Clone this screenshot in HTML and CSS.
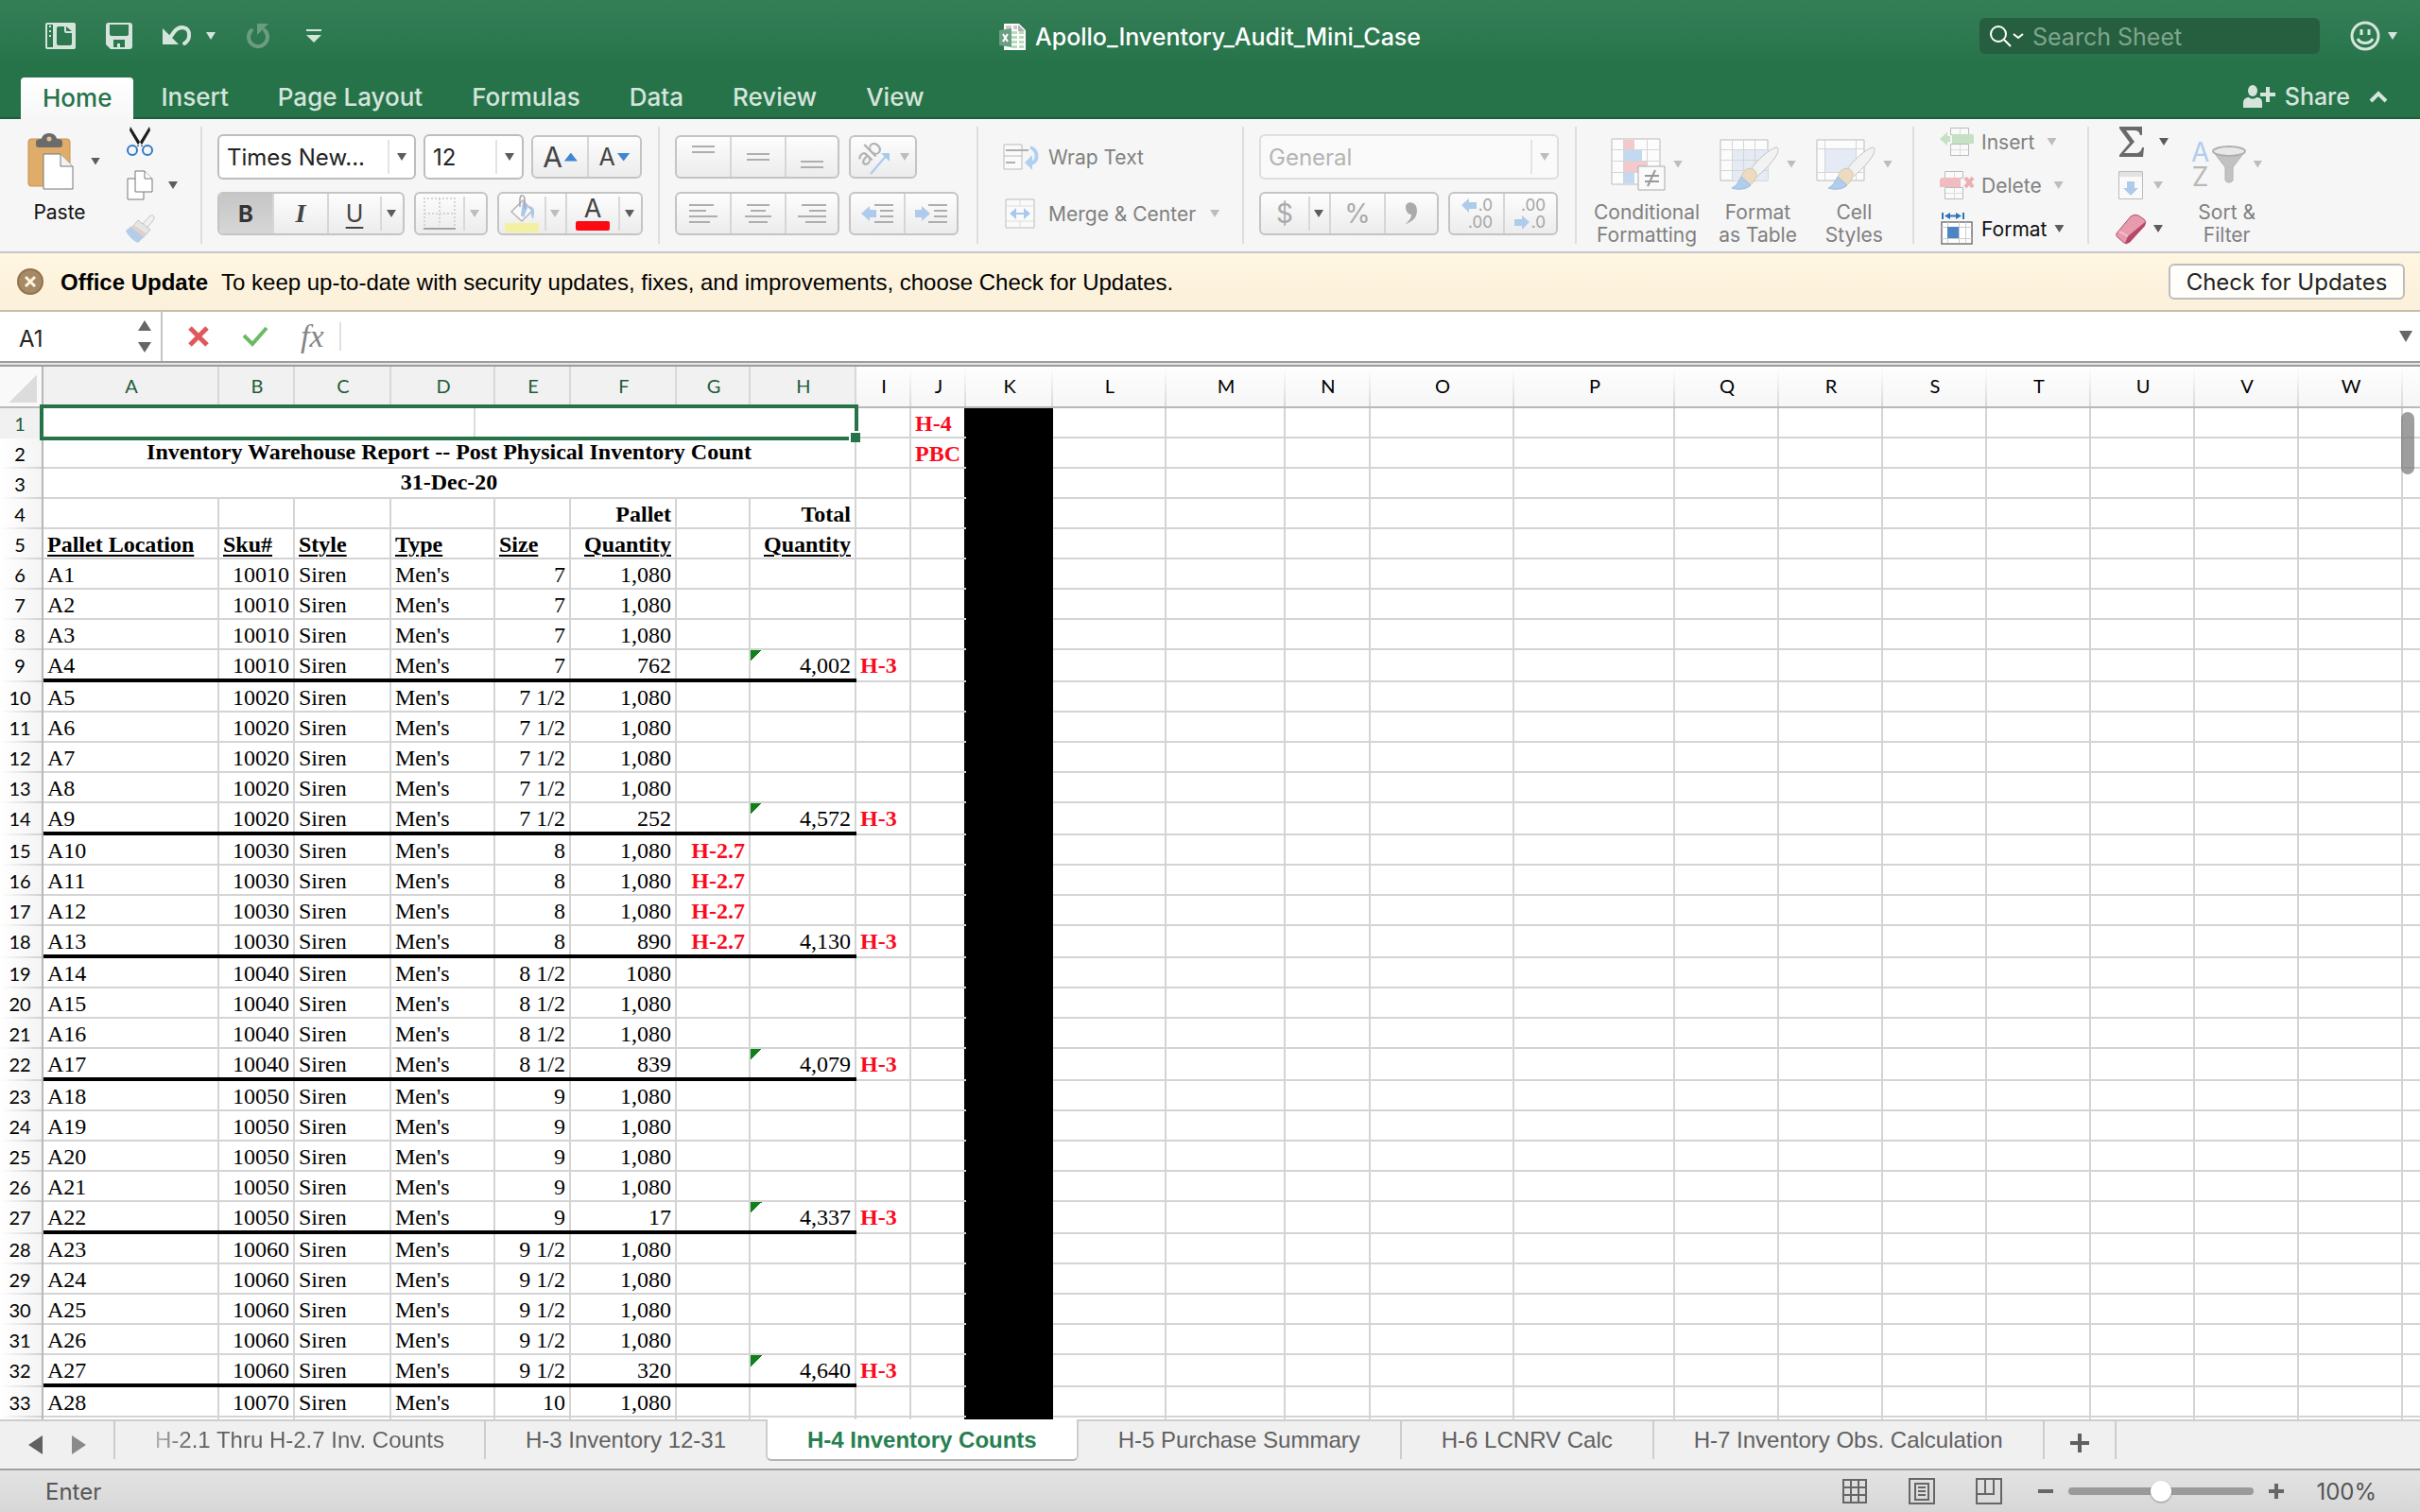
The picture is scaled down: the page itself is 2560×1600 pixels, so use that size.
FILE: index.html
```html
<!DOCTYPE html>
<html lang="en">

	<head>
		<meta charset="UTF-8">
		<title>Apollo_Inventory_Audit_Mini_Case</title>
		<link rel="stylesheet" href="styles.css">
	</head>

	<body>
		<header class="top">
			<div class="titlebar">
				<div class="quick">
					<button class="plain" aria-label="File gallery"><svg width="32" height="28" viewBox="0 0 32 28"><path fill="#d6e5dc" fill-rule="evenodd" d="M2 0h28a2 2 0 0 1 2 2v24a2 2 0 0 1-2 2H2a2 2 0 0 1-2-2V2a2 2 0 0 1 2-2zM2 2v24h6V2zM14 4q-2 0-2 2v16q0 2 2 2h12q2 0 2-2V11h-6q-2 0-2-2V4zM22 4v5h6z"/><path stroke="#d6e5dc" stroke-width="2" stroke-dasharray="2 3" d="M5 3v12"/></svg></button>
					<button class="plain save" aria-label="Save"><svg width="28" height="28" viewBox="0 0 28 28"><path fill="#d6e5dc" fill-rule="evenodd" d="M3 0h22a3 3 0 0 1 3 3v22a3 3 0 0 1-3 3H5l-5-5V3a3 3 0 0 1 3-3zM4 2v10q0 2 2 2h16q2 0 2-2V2zM8 18v8h4v-4h3v4h5v-8z"/></svg></button>
					<button class="plain undo" aria-label="Undo"><svg width="32" height="24" viewBox="0 0 32 24"><path fill="#d6e5dc" d="M0 4v17h17z"/><path fill="none" stroke="#d6e5dc" stroke-width="4" stroke-linecap="round" d="M7 15L12 8C17 1 29 1 28 12 28 15 26 18 23 20"/></svg><i class="caret light"></i></button>
					<button class="plain redo" aria-label="Redo"><svg width="26" height="28" viewBox="0 0 26 28"><path fill="#6c9d80" d="M12 1h12L12 13z"/><path fill="none" stroke="#6c9d80" stroke-width="4" stroke-linecap="round" d="M6 8A10 10 0 1 0 20 8"/></svg></button>
					<button class="plain" aria-label="Customize toolbar"><svg width="16" height="16" viewBox="0 0 16 16"><path fill="#d6e5dc" d="M0 1h16v2H0zM0 7h16l-8 8z"/></svg></button>
				</div>
				<h1 class="title">
					<svg width="28" height="28" viewBox="0 0 28 28"><path fill="#fff" d="M5 0h16l7 7v21H5z"/><path fill="#c9c9c9" d="M7 2h6v4H7zM15 2h4v4h-4z"/><path fill="#b9dcbd" d="M13 8h6v3h-6zM21 8h5v3h-5zM13 13h6v3h-6zM21 13h5v3h-5zM13 18h6v3h-6zM21 18h5v3h-5zM13 23h6v3h-6zM21 23h5v3h-5z"/><path fill="#b0b0b0" d="M20 1v7h7z"/><path fill="#6c9f82" d="M0 7l13-2v20L0 23z"/><path stroke="#fff" stroke-width="2" d="M4 11l5 8M9 11l-5 8"/></svg>
					Apollo_Inventory_Audit_Mini_Case
				</h1>
				<div class="top-right">
					<label class="search">
						<svg width="36" height="24" viewBox="0 0 36 24" fill="none" stroke="#fff" stroke-width="2"><circle cx="10" cy="10" r="8"/><path d="M16 16l7 7M26 10l5 4 5-4"/></svg>
						<input type="text" placeholder="Search Sheet" aria-label="Search Sheet">
					</label>
					<button class="plain smile" aria-label="Feedback"><svg width="32" height="32" viewBox="0 0 32 32" fill="none" stroke="#d6e5dc" stroke-width="3"><circle cx="16" cy="16" r="14"/><path d="M12 9v6M20 9v6M8 19c3 6 13 6 16 0"/></svg><i class="caret light"></i></button>
				</div>
			</div>
			<nav class="tabs">
				<a class="tab on" href="#">Home</a>
				<a class="tab" href="#">Insert</a>
				<a class="tab" href="#">Page Layout</a>
				<a class="tab" href="#">Formulas</a>
				<a class="tab" href="#">Data</a>
				<a class="tab" href="#">Review</a>
				<a class="tab" href="#">View</a>
				<button class="plain share"><svg width="34" height="24" viewBox="0 0 34 24" fill="#d6e5dc"><ellipse cx="10" cy="6" rx="5" ry="6"/><path d="M0 24v-5c0-4 3-6 6-6 2 2 6 2 8 0 4 0 6 2 6 6v5z"/><path d="M24 2h4v6h6v4h-6v6h-4v-6h-6V8h6z"/></svg>Share</button>
				<button class="plain fold" aria-label="Collapse ribbon"><svg width="20" height="14" viewBox="0 0 20 14"><path fill="none" stroke="#d6e5dc" stroke-width="4" d="M2 12l8-8 8 8"/></svg></button>
			</nav>
		</header>

		<div class="ribbon">
			<div class="group clip">
				<button class="plain big">
					<span class="pic paste-pic"><svg width="48" height="60" viewBox="0 0 48 60"><rect y="6" width="44" height="50" rx="3" fill="#dfac69" stroke="#c9924c"/><path fill="#6b6b6b" d="M8 9q0-3 6-3c1-8 15-8 16 0q6 0 6 3v3q0 3-3 3H11q-3 0-3-3z"/><circle cx="22" cy="6" r="2.500" fill="#e8c392"/><path fill="#fff" stroke="#777" d="M16 22h18l13 13v24H16z"/><path fill="#f2f2f2" stroke="#777" d="M34 22v13h13"/></svg><i class="caret"></i></span>
					<span class="cap paste-cap">Paste</span>
				</button>
				<div class="minis">
					<button class="plain mini" aria-label="Cut"><svg width="32" height="32" viewBox="0 0 32 32"><path fill="#1c1c1c" d="M6 0l13 21h-4L5 4zM26 0L13 21h4L27 4z"/><g fill="none" stroke="#2f7bcb" stroke-width="2"><circle cx="8" cy="25" r="5"/><circle cx="24" cy="25" r="5"/></g></svg></button>
					<button class="plain mini copy" aria-label="Copy"><svg width="32" height="32" viewBox="0 0 32 32" fill="#fff" stroke="#777"><path d="M3 9h17v22H3z"/><path d="M11 1h10l8 8v14H11z"/><path d="M21 1v8h8"/></svg><i class="caret"></i></button>
					<button class="plain mini" aria-label="Format painter" disabled><svg width="32" height="32" viewBox="0 0 32 32"><path fill="#f0f0f0" stroke="#c4c4c4" d="M19 11l7-8c3-3 7 0 4 4l-7 9z"/><path fill="#e5e5e5" stroke="#c4c4c4" d="M14 7l13 10-4 5L9 13z"/><path fill="#e3cfc8" d="M9 12l14 10-3 4L5 15z"/><path fill="#b2cdea" d="M6 14l14 11-6 6C9 29 3 23 1 18z"/></svg></button>
				</div>
			</div>

			<div class="group font two">
				<div class="line">
					<span class="combo name"><select aria-label="Font"><option>Times New...</option></select><i class="caret"></i></span>
					<span class="combo size"><select aria-label="Font size"><option>12</option></select><i class="caret"></i></span>
					<div class="seg">
						<button class="w59 cut" aria-label="Increase font size"><span class="big-a">A</span><i class="tri up"></i></button>
						<button class="w54" aria-label="Decrease font size"><span class="small-a">A</span><i class="tri"></i></button>
					</div>
				</div>
				<div class="line wide">
					<div class="seg">
						<button class="w58 cut pressed"><b>B</b></button>
						<button class="w58 cut ital">I</button>
						<button class="w54 under"><u>U</u></button>
						<button class="w24 more" aria-label="Underline options"><i class="caret"></i></button>
					</div>
					<div class="seg">
						<button class="w50" aria-label="Borders" disabled><svg width="34" height="34" viewBox="0 0 34 34" fill="none" stroke="#d4d4d4" stroke-width="2"><path stroke-dasharray="2 2" d="M1 30V1h32v29M17 1v29M1 17h32"/><path stroke="#a4a4a4" d="M0 33h34"/></svg></button>
						<button class="w24 more" aria-label="Border options" disabled><i class="caret"></i></button>
					</div>
					<div class="seg">
						<button class="w48" aria-label="Fill color" disabled><svg width="36" height="40" viewBox="0 0 36 40"><path fill="#fafafa" stroke="#b5b5b5" stroke-width="1.500" d="M7 18L19 6l10 11-11 11z"/><path fill="#a9c9ec" d="M19 7l6 5-5 12-3-2zM26 12c6 1 6 6 4 14-4-5-1-8-4-14z"/><path fill="none" stroke="#a5a5a5" stroke-width="1.500" d="M16 13V5c0-6 5-5 5 0v10"/><rect y="30" width="36" height="10" rx="2" fill="#f3f0a4"/></svg></button>
						<button class="w24 more cut" aria-label="Fill options" disabled><i class="caret"></i></button>
						<button class="w54 color">A<i></i></button>
						<button class="w24 more" aria-label="Font color options"><i class="caret"></i></button>
					</div>
				</div>
			</div>

			<div class="group align two">
				<div class="line wide">
					<div class="seg">
						<button class="w58 cut" aria-label="Top align" disabled><svg class="gl" width="32" height="32"><path d="M4 5h24M4 11h24"/></svg></button>
						<button class="w58 cut" aria-label="Middle align" disabled><svg class="gl" width="32" height="32"><path d="M4 13h24M4 19h24"/></svg></button>
						<button class="w54" aria-label="Bottom align" disabled><svg class="gl" width="32" height="32"><path d="M4 21h24M4 27h24"/></svg></button>
					</div>
					<div class="seg">
						<button class="w68" aria-label="Orientation" disabled><svg width="36" height="36" viewBox="0 0 36 36"><text x="9" y="29" transform="rotate(-45 9 29)" font-family="Inter, sans-serif" font-size="24" fill="#b0b0b0">ab</text><path fill="none" stroke="#a9c9ec" stroke-width="2" d="M15 36l18-21"/><path fill="#a9c9ec" d="M26 14h9v9z"/></svg><i class="caret"></i></button>
					</div>
				</div>
				<div class="line wide">
					<div class="seg">
						<button class="w58 cut" aria-label="Align left" disabled><svg class="gl" width="32" height="22"><path d="M1 2h26M1 8h18M1 14h30M1 20h22"/></svg></button>
						<button class="w58 cut" aria-label="Center" disabled><svg class="gl" width="32" height="22"><path d="M4 2h24M8 8h16M2 14h28M6 20h20"/></svg></button>
						<button class="w54" aria-label="Align right" disabled><svg class="gl" width="32" height="22"><path d="M5 2h26M13 8h18M1 14h30M9 20h22"/></svg></button>
					</div>
					<div class="seg">
						<button class="w58 cut" aria-label="Decrease indent" disabled><svg class="gl" width="34" height="22"><path d="M14 2h20M20 8h14M20 14h14M14 20h20"/><path class="bl" d="M0 11l9-8v4h7v8H9v4z"/></svg></button>
						<button class="w54" aria-label="Increase indent" disabled><svg class="gl" width="34" height="22"><path d="M14 2h20M20 8h14M20 14h14M14 20h20"/><path class="bl" d="M16 11L7 3v4H0v8h7v4z"/></svg></button>
					</div>
				</div>
			</div>

			<div class="group wrap two">
				<button class="plain item" disabled><svg width="38" height="28" viewBox="0 0 38 28"><path fill="#fafafa" stroke="#bbb" d="M1 1h19v26H1zM1 13h19"/><path stroke="#b0b0b0" stroke-width="2" d="M3 7h24M3 20h10"/><path fill="none" stroke="#b2d0ef" stroke-width="4" d="M29 4c8 3 9 14 1 17"/><path fill="#b2d0ef" d="M23 20l8-8v16z"/></svg>Wrap Text</button>
				<button class="plain item" disabled><svg width="38" height="32" viewBox="0 0 38 32"><path fill="#fafafa" stroke="#bbb" d="M3 1h30v30H3z"/><path fill="none" stroke="#ddd" d="M3 8h30M3 24h30M18 1v7M18 24v7"/><path stroke="#a9c9ec" stroke-width="2" d="M10 16h16"/><path fill="#a9c9ec" d="M7 16l7-6v12zM29 16l-7-6v12z"/></svg>Merge &amp; Center<i class="caret"></i></button>
			</div>

			<div class="group number two">
				<div class="line">
					<span class="combo format"><select aria-label="Number format" disabled><option>General</option></select><i class="caret"></i></span>
				</div>
				<div class="line wide">
					<div class="seg">
						<button class="w50 sign" disabled>$</button>
						<button class="w24 more cut" aria-label="Currency options"><i class="caret"></i></button>
						<button class="w58 cut sign" disabled>%</button>
						<button class="w54" aria-label="Comma style" disabled><svg width="16" height="24" viewBox="0 0 16 24"><path fill="#aaa" d="M2 5c0-7 12-7 12 4 0 8-6 12-12 14 3-3 6-6 6-10-3 0-6-3-6-8z"/></svg></button>
					</div>
					<div class="seg">
						<button class="w58 cut dec" disabled><span><svg width="16" height="14"><path class="bl" d="M0 7l8-7v4h8v7H8v4z"/></svg>.0</span><span>.00</span></button>
						<button class="w54 dec" disabled><span>.00</span><span><svg width="16" height="14"><path class="bl" d="M16 7L8 0v4H0v7h8v4z"/></svg>.0</span></button>
					</div>
				</div>
			</div>

			<div class="group styles">
				<button class="plain big" disabled>
					<span class="pic"><svg width="58" height="56" viewBox="0 0 58 56"><path fill="#fcfcfc" stroke="#bbb" d="M1 1h51v48H1z"/><path fill="#f3c9cb" d="M14 2h11v10H14zM14 25h25v11H14z"/><path fill="#c2d9f1" d="M14 13h19v11H14zM14 37h11v11H14z"/><path fill="none" stroke="#d5d5d5" d="M1 12.500h51M1 24.500h51M1 36.500h51M13.500 1v48M38.500 1v48"/><path fill="#fafafa" stroke="#aaa" d="M29 30h28v25H29z"/><path stroke="#999" stroke-width="2" d="M36 40h15M36 46h15M47 34l-8 17"/></svg><i class="caret"></i></span>
					<span class="cap">Conditional<br>Formatting</span>
				</button>
				<button class="plain big" disabled>
					<span class="pic"><svg width="63" height="54" viewBox="0 0 63 54"><path fill="#fcfcfc" stroke="#bbb" d="M1 1h50v43H1z"/><path fill="#e4ebf4" d="M13 12h38v32H13z"/><path fill="none" stroke="#d5d5d5" d="M1 11.500h50M1 22.500h50M1 33.500h50M13.500 1v43M25.500 1v43M37.500 1v43"/><use href="#brush"/></svg><i class="caret"></i></span>
					<span class="cap">Format<br>as Table</span>
				</button>
				<button class="plain big" disabled>
					<span class="pic"><svg width="63" height="54" viewBox="0 0 63 54"><path fill="#fcfcfc" stroke="#bbb" d="M1 1h50v43H1z"/><path fill="none" stroke="#d5d5d5" d="M1 10.500h50M1 35.500h50M9.500 1v43M42.500 1v43"/><path fill="#e4ebf4" d="M10 11h32v24H10z"/><g id="brush"><path fill="#f2f2f2" stroke="#c2c2c2" d="M31 35C40 22 52 11 60 9c3 0 2 4 1 7-5 9-13 17-23 25z"/><path fill="#ecdbc0" stroke="#d8c6a8" d="M23 41c2-9 9-12 14-8 5 5 0 13-5 16z"/><path fill="#b0cdee" stroke="#9dbbe0" d="M23 40l10 9c-5 5-14 5-20 3 5-2 7-7 10-12z"/></g></svg><i class="caret"></i></span>
					<span class="cap">Cell<br>Styles</span>
				</button>
			</div>

			<div class="group cells minis">
				<button class="plain item" disabled><svg width="36" height="32" viewBox="0 0 36 32"><path fill="#fafafa" stroke="#bbb" d="M11.500 1.500h19v7h-19zM11.500 18.500h19v12h-19z"/><path stroke="#ddd" d="M21.500 2v6M21.500 19v11M12 24.500h18"/><path fill="#c5e0c2" d="M0 13l8-7v4h3v6H8v4zM13 8h21a2 2 0 0 1 2 2v8H13z"/></svg>Insert<i class="caret"></i></button>
				<button class="plain item" disabled><svg width="36" height="32" viewBox="0 0 36 32"><path fill="#fafafa" stroke="#bbb" d="M5.500 1.500h19v7h-19zM5.500 18.500h19v12h-19z"/><path stroke="#ddd" d="M15.500 2v6M15.500 19v11M6 24.500h18"/><path fill="#f0bcbf" d="M2 8h20v10H0v-8z"/><path stroke="#eab0b3" stroke-width="4" d="M27 8l8 10M35 8l-8 10"/></svg>Delete<i class="caret"></i></button>
				<button class="plain item"><svg width="36" height="34" viewBox="0 0 36 34"><path stroke="#2f74b9" stroke-width="2" d="M3 0v7M25 0v7M8 3.500h12"/><path fill="#2f74b9" d="M5 3.500l6-3.500v7zM23 3.500l-6-3.500v7z"/><path fill="#fff" stroke="#777" stroke-width="1.500" d="M2 10h32v23H2z"/><path stroke="#ccc" d="M8.500 10v22M20.500 10v22M27.500 10v22M2 15.500h32M2 27.500h32"/><path fill="#4a86c6" d="M8 15h12v12H8z"/></svg>Format<i class="caret"></i></button>
			</div>

			<div class="group edit">
				<div class="minis">
					<button class="plain mini" aria-label="AutoSum"><svg width="38" height="32" viewBox="0 0 38 32"><path fill="#6a6a6a" d="M4 0h24v9h-2c-1-4-3-5-7-5h-8l9 12-11 12h12c4 0 6-2 7-6h2l-1 10H4v-2l11-13L4 2z"/></svg><i class="caret"></i></button>
					<button class="plain mini" aria-label="Fill" disabled><svg width="32" height="32" viewBox="0 0 32 32"><path fill="#fafafa" stroke="#bbb" d="M3.500 1.500h25v29h-25z"/><path fill="#e2e2e2" d="M4 2h24v5H4z"/><path class="bl" d="M12 12h8v7h4l-8 8-8-8h4z"/></svg><i class="caret"></i></button>
					<button class="plain mini" aria-label="Clear"><svg width="32" height="32" viewBox="0 0 32 32"><path fill="#e89aae" stroke="#b4536d" d="M1 21L16 3q4-3 8-1l6 4q3 2 1 6L15 30q-4 3-6 1l-7-6q-2-2-1-4z"/><path fill="#b8476a" d="M31 9v4L15 30q-3 2-5 1l3-7z"/><path fill="none" stroke="#f6c3cf" stroke-width="2" d="M4 19l9 5"/></svg><i class="caret"></i></button>
				</div>
				<button class="plain big" disabled>
					<span class="pic az"><span class="letters"><span>A</span><span>Z</span></span><svg width="36" height="40" viewBox="0 0 36 40"><path fill="#c2c2c2" stroke="#b0b0b0" d="M1 6l13 17v13c0 4 8 4 8 0V23L35 6z"/><ellipse cx="18" cy="6" rx="17" ry="5" fill="#e8e8e8" stroke="#b0b0b0" stroke-width="2"/></svg><i class="caret"></i></span>
					<span class="cap">Sort &amp;<br>Filter</span>
				</button>
			</div>
		</div>

		<div class="notice">
			<button class="plain close" aria-label="Dismiss"><svg width="28" height="28" viewBox="0 0 28 28"><circle cx="14" cy="14" r="13" fill="#a68a66" stroke="#8f7350" stroke-width="2"/><path stroke="#fdf3df" stroke-width="3" d="M9 9l10 10M19 9L9 19"/></svg></button>
			<strong>Office Update</strong>
			<span class="msg">To keep up-to-date with security updates, fixes, and improvements, choose Check for Updates.</span>
			<button class="check">Check for Updates</button>
		</div>

		<div class="formula">
			<div class="namebox">
				<input type="text" value="A1" aria-label="Name box">
				<svg width="14" height="34" viewBox="0 0 14 34" fill="#666"><path d="M7 0l7 11H0zM7 34l7-11H0z"/></svg>
			</div>
			<button class="plain" aria-label="Cancel"><svg width="22" height="22" viewBox="0 0 22 22"><path stroke="#e0585b" stroke-width="5" d="M2 2l18 18M20 2L2 20"/></svg></button>
			<button class="plain ok" aria-label="Enter"><svg width="28" height="22" viewBox="0 0 28 22"><path fill="none" stroke="#6cba64" stroke-width="4" d="M2 10l9 9L26 2"/></svg></button>
			<button class="plain fx" aria-label="Insert function">fx</button>
			<input class="entry" type="text" aria-label="Formula">
			<button class="plain" aria-label="Expand formula bar"><svg width="14" height="12"><path fill="#666" d="M0 0h14l-7 12z"/></svg></button>
		</div>

		<main class="sheet">
			<table id="grid">
				<colgroup></colgroup>
				<thead></thead>
				<tbody></tbody>
			</table>
			<div class="scroll"></div>
		</main>

		<div class="sheets">
			<div class="arrows">
				<button class="plain" aria-label="Previous sheet"><svg width="15" height="20"><path fill="#606060" d="M15 0v20L0 10z"/></svg></button>
				<button class="plain" aria-label="Next sheet"><svg width="15" height="20"><path fill="#8a8a8a" d="M0 0v20l15-10z"/></svg></button>
			</div>
			<a class="leaf faded" href="#">H-2.1 Thru H-2.7 Inv. Counts</a>
			<a class="leaf before" href="#">H-3 Inventory 12-31</a>
			<a class="leaf now" href="#">H-4 Inventory Counts</a>
			<a class="leaf" href="#">H-5 Purchase Summary</a>
			<a class="leaf" href="#">H-6 LCNRV Calc</a>
			<a class="leaf" href="#">H-7 Inventory Obs. Calculation</a>
			<button class="leaf add" aria-label="New sheet"><svg width="20" height="20"><path stroke="#606060" stroke-width="4" d="M10 0v20M0 10h20"/></svg></button>
		</div>

		<footer class="status">
			<span class="mode">Enter</span>
			<button class="plain" aria-label="Normal view"><svg class="vw" width="28" height="28"><path d="M2 2h24v24H2zM10 2v24M18 2v24M2 10h24M2 18h24"/></svg></button>
			<button class="plain" aria-label="Page layout view"><svg class="vw" width="28" height="28"><path d="M1 1h26v26H1zM7 6h14v17H7zM10 10h8M10 14h8M10 18h8"/></svg></button>
			<button class="plain" aria-label="Page break view"><svg class="vw" width="28" height="28"><path d="M1 1h26v26H1zM1 17h18V1M10 1v16"/></svg></button>
			<div class="zoom">
				<button class="plain" aria-label="Zoom out"><svg width="16" height="16"><path fill="#666" d="M0 6h16v4H0z"/></svg></button>
				<input type="range" min="0" max="200" value="100" aria-label="Zoom">
				<button class="plain" aria-label="Zoom in"><svg width="16" height="16"><path fill="#666" d="M0 6h6V0h4v6h6v4h-6v6H6v-6H0z"/></svg></button>
			</div>
			<span class="percent">100%</span>
		</footer>
		<script src="script.js" charset="UTF-8"></script>
	</body>

</html>
```

FILE: styles.css
```css
* {
	margin: 0;
	padding: 0;
	box-sizing: border-box;
}

body {
	display: flex;
	flex-direction: column;
	height: 100vh;
	overflow: hidden;
	font-family: Inter, "Liberation Sans", sans-serif;
	font-size: 24px;
	color: #222;
	background-color: #fff;
}

button, input, select {
	font: inherit;
	color: inherit;
	border: none;
	outline: none;
	background: none;
}
a {
	color: inherit;
	text-decoration: none;
}
svg {
	display: block;
	flex: none;
	overflow: visible;
}
.plain {
	display: flex;
	align-items: center;
}

.caret {
	flex: none;
	width: 10px;
	height: 8px;
	background-color: #5c5c5c;
	clip-path: polygon(0 0, 100% 0, 50% 100%);
}
.caret.light {
	background-color: #d6e5dc;
}
:disabled .caret, :disabled + .caret {
	background-color: #bdbdbd;
}

/* green top */
.top {
	background: linear-gradient(#357f57, #26734a 70px);
	border-bottom: 2px solid #1e5f3b;
	color: #d6e5dc;
}
.titlebar {
	display: grid;
	grid-template-columns: 1fr auto 1fr;
	height: 76px;
}
.quick {
	display: flex;
	align-items: center;
	gap: 32px;
	padding-left: 48px;
}
.undo {
	gap: 14px;
}
.redo {
	margin-right: 6px;
}
.title {
	display: flex;
	align-items: center;
	gap: 10px;
	padding-top: 2px;
	font-size: 25px;
	font-weight: 500;
	color: #fff;
}
.top-right {
	display: flex;
	align-items: center;
	justify-content: flex-end;
	gap: 32px;
	padding-right: 24px;
}
.search {
	display: flex;
	align-items: center;
	gap: 10px;
	width: 360px;
	height: 38px;
	padding: 0 10px;
	border-radius: 6px;
	background-color: #265f3f;
}
.search input {
	width: 260px;
	padding-top: 2px;
	font-size: 25px;
}
.search input::placeholder {
	color: #7fa58e;
}
.smile {
	gap: 8px;
}
.tabs {
	display: flex;
	align-items: flex-end;
	gap: 6px;
	height: 48px;
	padding: 0 34px 0 22px;
	font-size: 26px;
	font-weight: 500;
}
.tab {
	height: 42px;
	padding: 0 23px;
	line-height: 42px;
}
.tab.on {
	height: 44px;
	line-height: 44px;
	margin-bottom: -2px;
	background: linear-gradient(#fff, #f7f7f7);
	border-radius: 4px 4px 0 0;
	color: #26734a;
}
.share {
	gap: 10px;
	height: 42px;
	margin-left: auto;
	padding-bottom: 2px;
	font-size: 25px;
	font-weight: 500;
}
.fold {
	height: 42px;
	padding-bottom: 2px;
	margin-left: 14px;
}

/* ribbon */
.ribbon {
	display: flex;
	height: 142px;
	padding: 8px 0;
	background-color: #f6f6f6;
	border-bottom: 2px solid #c6c6c6;
	font-size: 21px;
}
.group {
	flex: none;
	display: flex;
	border-right: 2px solid #dedede;
}
.two {
	flex-direction: column;
	gap: 12px;
	padding: 8px 0 8px 16px;
}
.line {
	display: flex;
	align-items: center;
	gap: 8px;
	height: 48px;
}
.line.wide {
	gap: 10px;
}
.clip {
	width: 214px;
	padding-left: 30px;
	gap: 26px;
}
.font {
	width: 484px;
}
.align {
	width: 337px;
}
.wrap {
	width: 281px;
	padding-left: 26px;
}
.number {
	width: 352px;
}
.styles {
	width: 357px;
	padding-left: 18px;
	gap: 20px;
}
.cells {
	width: 185px;
	padding-left: 27px;
}
.edit {
	padding-left: 28px;
	gap: 24px;
	border-right: none;
}
.big {
	flex-direction: column;
	align-self: flex-start;
	line-height: 24px;
	text-align: center;
}
.pic {
	display: flex;
	align-items: center;
	gap: 8px;
	height: 79px;
}
.paste-pic {
	gap: 18px;
	padding-bottom: 6px;
}
.paste-cap {
	padding-right: 10px;
	color: #111;
}
.big:disabled, .item:disabled {
	color: #808080;
}
.minis {
	display: flex;
	flex-direction: column;
	gap: 14px;
}
.mini {
	gap: 8px;
	height: 32px;
}
.copy {
	gap: 14px;
}
.item {
	gap: 8px;
	height: 48px;
	color: #111;
}
.wrap .item {
	gap: 10px;
}
.minis .item {
	height: 32px;
}
.item:disabled .caret {
	margin-left: 5px;
}

.combo {
	position: relative;
	display: flex;
	align-items: center;
	height: 48px;
	border: 2px solid #bdbdbd;
	border-radius: 6px;
	background-color: #fff;
}
.combo select {
	appearance: none;
	width: 100%;
	height: 100%;
	padding-left: 8px;
	font-size: 24px;
}
.combo .caret {
	position: absolute;
	right: 8px;
}
.combo::after {
	content: "";
	position: absolute;
	right: 26px;
	width: 2px;
	height: 36px;
	background-color: #e4e4e4;
}
.name {
	width: 210px;
}
.size {
	width: 106px;
}
.format {
	width: 317px;
	border-color: #dedede;
	background-color: #fafafa;
}
.format select:disabled {
	color: #b4b4b4;
	opacity: 1;
}
.seg {
	display: flex;
	height: 46px;
	border: 2px solid #c4c4c4;
	border-radius: 6px;
	overflow: hidden;
	background: linear-gradient(#fdfdfd, #ececec);
}
.seg button {
	display: flex;
	align-items: center;
	justify-content: center;
	color: #444;
}
.seg .cut {
	border-right: 2px solid #d6d6d6;
}
.w24 {
	width: 24px;
}
.w48 {
	width: 48px;
}
.w50 {
	width: 50px;
}
.w54 {
	width: 54px;
}
.w58 {
	width: 58px;
}
.w59 {
	width: 59px;
}
.w68 {
	width: 68px;
	gap: 10px;
}
.more {
	background: linear-gradient(#d9d9d9, #d9d9d9) 0 50% / 2px 36px no-repeat;
}
.seg .pressed {
	background: linear-gradient(#c6c6c6, #d6d6d6);
	font-size: 24px;
	color: #333;
}
.ital {
	font: italic bold 28px "Liberation Serif", serif;
}
.big-a {
	font-size: 30px;
}
.small-a {
	font-size: 25px;
}
.tri {
	width: 14px;
	height: 9px;
	margin-left: 2px;
	background-color: #3f87d2;
	clip-path: polygon(0 0, 100% 0, 50% 100%);
}
.tri.up {
	clip-path: polygon(0 100%, 100% 100%, 50% 0);
}
.under {
	font-size: 25px;
}
.under u {
	text-decoration-thickness: 2px;
	text-underline-offset: 5px;
}
.seg .color {
	flex-direction: column;
	font-size: 27px;
	line-height: 26px;
}
.color i {
	width: 36px;
	height: 10px;
	border-radius: 2px;
	background-color: #fb0a12;
}
.gl {
	fill: none;
	stroke: #aeaeae;
	stroke-width: 2px;
}
.bl {
	fill: #aecbec;
	stroke: none;
}
.seg .sign {
	font-size: 28px;
	color: #aaa;
}
.seg .dec {
	flex-direction: column;
	align-items: flex-end;
	padding-right: 11px;
	font-size: 17px;
	line-height: 18px;
	color: #a4a4a4;
}
.dec span {
	display: flex;
	align-items: center;
	gap: 2px;
}
.pic.az {
	gap: 3px;
}
.az .caret {
	margin-left: 4px;
}
.letters {
	display: flex;
	flex-direction: column;
	font-size: 28px;
	line-height: 26px;
	color: #b9b9b9;
}
.letters span:first-child {
	color: #b0cdee;
}

/* update notice */
.notice {
	display: flex;
	align-items: center;
	height: 62px;
	padding: 0 16px 0 18px;
	background: linear-gradient(#fff6e1, #fbf0da);
	border-bottom: 2px solid #c4bfae;
	font-family: "Liberation Sans", sans-serif;
	color: #000;
}
.notice strong, .msg {
	padding-top: 2px;
}
.close {
	margin-right: 18px;
}
.msg {
	margin-left: 14px;
}
.check {
	width: 250px;
	height: 38px;
	margin-left: auto;
	border: 2px solid #bdbdbd;
	border-radius: 6px;
	background-color: #fffefa;
	font-family: Inter, sans-serif;
	color: #222;
}

/* formula bar */
.formula {
	display: flex;
	align-items: center;
	height: 58px;
	padding: 0 8px 6px 0;
	background: linear-gradient(#9c9c9c 2px, #e4e4e4 2px, #e4e4e4 4px, #9c9c9c 4px) bottom / 100% 6px no-repeat;
}
.namebox {
	display: flex;
	align-items: center;
	justify-content: space-between;
	width: 172px;
	height: 52px;
	margin-right: 27px;
	padding: 0 10px 0 20px;
	border-right: 2px solid #c4c4c4;
}
.namebox input {
	width: 100px;
	padding-top: 4px;
}
.ok {
	margin: 0 34px 0 35px;
}
.fx {
	font: italic 34px "Liberation Serif", serif;
	color: #858585;
}
.entry {
	flex: 1;
	height: 30px;
	margin-left: 16px;
	border-left: 2px solid #e0e0e0;
}

/* grid */
.sheet {
	position: relative;
	flex: 1;
	overflow: hidden;
}
.scroll {
	position: absolute;
	top: 48px;
	right: 6px;
	width: 14px;
	height: 66px;
	border-radius: 7px;
	background-color: rgba(125, 125, 125, 0.75);
}
table {
	table-layout: fixed;
	width: 2652px;
	border-collapse: separate;
	border-spacing: 0;
}
th {
	font: 20px/28px Lato, sans-serif;
	color: #000;
}
thead th {
	height: 44px;
	padding: 0 0 2px;
	border-bottom: 2px solid #b8b8b8;
	background: linear-gradient(#fff, #d8d8d8) right / 2px 100% no-repeat, linear-gradient(#fefefe, #f6f6f6);
}
thead .corner {
	border-right: 2px solid #b8b8b8;
	background: linear-gradient(to bottom right, transparent 50%, #dcdcdc 50%) 10px 9px / 29px 29px no-repeat #f9f9f9;
}
tbody th {
	height: 32px;
	padding: 2px 2px 0 0;
	vertical-align: top;
	border-right: 2px solid #b8b8b8;
	background: linear-gradient(to right, #fff, #d0d0d0) bottom / 100% 2px no-repeat, linear-gradient(to right, #fff, #f4f4f4);
}
thead .picked, tbody .picked {
	color: #1f5c3a;
	background-color: #f1f1f1;
	background-image: linear-gradient(#d8d8d8, #d8d8d8);
	background-size: 2px 100%;
}
tbody .picked {
	background-image: none;
}
td {
	height: 32px;
	padding: 2px 4px 0;
	vertical-align: top;
	border-right: 2px solid #d4d4d4;
	border-bottom: 2px solid #d4d4d4;
	font: 24px/28px "Liberation Serif", serif;
	color: #000;
	white-space: nowrap;
}
.num {
	text-align: right;
}
.head {
	font-weight: bold;
}
.line-under {
	text-decoration: underline;
	text-decoration-thickness: 2px;
	text-underline-offset: 3px;
}
.report {
	padding: 0 4px 2px;
	text-align: center;
	font-weight: bold;
}
.ref {
	font-weight: bold;
	color: #fb0a1c;
}
.last td, .last th {
	height: 34px;
}
/* thick rule under a finished sku, drawn over the column lines */
.last .sum {
	padding-right: 6px;
	border: none;
	background: linear-gradient(#000, #000) bottom / 100% 4px no-repeat, linear-gradient(#d4d4d4, #d4d4d4) right / 2px 100% no-repeat;
}
.last .flag {
	background: linear-gradient(#000, #000) bottom / 100% 4px no-repeat, linear-gradient(#d4d4d4, #d4d4d4) right / 2px 100% no-repeat, linear-gradient(to bottom right, #12801a 50%, transparent 50%) 0 0 / 12px 12px no-repeat;
}
.black {
	background-color: #000;
	border-color: #000;
}
/* the black column also covers the line on its left */
td.edge {
	padding-right: 0;
	border-right: none;
	background: linear-gradient(#000, #000) right / 2px 100% no-repeat border-box;
}
.active {
	position: relative;
	background: linear-gradient(#dcdcdc, #dcdcdc) 455px 0 / 2px 100% no-repeat;
}
.selection {
	position: absolute;
	top: -4px;
	right: -4px;
	bottom: -4px;
	left: -4px;
	border: 4px solid #26734a;
}
.selection i {
	position: absolute;
	right: -6px;
	bottom: -6px;
	width: 12px;
	height: 12px;
	border: 2px solid #fff;
	border-width: 2px 0 0 2px;
	background-color: #26734a;
}

/* sheet tabs */
.sheets {
	display: flex;
	height: 54px;
	background-color: #f0f0f0;
	border-top: 2px solid #cdcdcd;
	border-bottom: 2px solid #a0a0a0;
	font-family: "Liberation Sans", sans-serif;
	color: #606060;
}
.arrows {
	display: flex;
	gap: 31px;
	width: 122px;
	height: 40px;
	padding: 10px 0 0 30px;
	border-right: 2px solid #cdcdcd;
}
.leaf {
	height: 40px;
	padding: 0 42px;
	line-height: 40px;
	border-right: 2px solid #cdcdcd;
}
.before {
	border-right: none;
}
.faded {
	color: transparent;
	background: linear-gradient(to right, #b8b8b8 40px, #606060 80px);
	background-clip: text;
}
.now {
	height: 44px;
	margin-top: -2px;
	line-height: 44px;
	background-color: #fff;
	border-left: 2px solid #cdcdcd;
	border-bottom: 2px solid #b4b4b4;
	border-radius: 0 0 6px 6px;
	font-weight: bold;
	color: #26804f;
}
.add {
	display: flex;
	align-items: center;
	padding: 6px 27px 0;
}

/* status bar */
.status {
	display: flex;
	align-items: center;
	gap: 43px;
	height: 44px;
	padding: 0 46px 0 48px;
	background: linear-gradient(#e3e3e3, #d7d7d7);
	color: #555;
}
.mode {
	margin-right: auto;
}
.vw {
	fill: none;
	stroke: #666;
	stroke-width: 2px;
}
.zoom {
	display: flex;
	align-items: center;
	gap: 16px;
	margin-left: -5px;
}
.zoom input {
	appearance: none;
	width: 196px;
	height: 8px;
	border-radius: 4px;
	background-color: #9a9a9a;
}
.zoom input::-webkit-slider-thumb {
	appearance: none;
	width: 22px;
	height: 22px;
	border-radius: 50%;
	background-color: #fff;
	box-shadow: 0 1px 2px #888;
}
.percent {
	margin-left: -9px;
}
```

FILE: script.js
```javascript
var letters = 'ABCDEFGHIJKLMNOPQRSTUVW'.split('');
var widths = [186, 80, 102, 110, 80, 112, 78, 112, 58, 58, 92, 120, 126, 90, 152, 170, 110, 110, 110, 110, 110, 110, 110, 110];
var groups = [
	{ sku: 10010, size: '7', counts: ['1,080', '1,080', '1,080', '762'], total: '4,002', flag: true },
	{ sku: 10020, size: '7 1/2', counts: ['1,080', '1,080', '1,080', '1,080', '252'], total: '4,572', flag: true },
	{ sku: 10030, size: '8', counts: ['1,080', '1,080', '1,080', '890'], total: '4,130', ref: 'H-2.7' },
	{ sku: 10040, size: '8 1/2', counts: ['1080', '1,080', '1,080', '839'], total: '4,079', flag: true },
	{ sku: 10050, size: '9', counts: ['1,080', '1,080', '1,080', '1,080', '17'], total: '4,337', flag: true },
	{ sku: 10060, size: '9 1/2', counts: ['1,080', '1,080', '1,080', '1,080', '320'], total: '4,640', flag: true },
	{ sku: 10070, size: '10', counts: ['1,080'] }
];
var grid = document.getElementById('grid');
var html = '';
var rowNo = 0;

function td(text, cls) {
	return `<td class="${cls || ''}">${text || ''}</td>`;
}

// columns I and up are the same on every row
function tail(i, j) {
	var out = td(i, 'ref') + td(j, 'ref edge') + td('', 'black');
	for(var n = 11; n < widths.length; n++) {
		out += td();
	}
	return out;
}

function row(cells, i, j, cls) {
	rowNo++;
	html += `<tr class="${cls || ''}"><th class="${rowNo == 1 ? 'picked' : ''}">${rowNo}</th>${cells}${tail(i, j)}</tr>`;
}

grid.querySelector('colgroup').innerHTML = '<col style="width:46px">' + widths.map(function(w) {
	return `<col style="width:${w}px">`;
}).join('');
grid.querySelector('thead').innerHTML = '<tr><th class="corner"></th>' + letters.map(function(l, n) {
	return `<th class="${n < 8 ? 'picked' : ''}">${l}</th>`;
}).join('') + '<th></th></tr>';

row('<td class="active" colspan="8"><div class="selection"><i></i></div></td>', '', 'H-4');
row('<td class="report" colspan="8">Inventory Warehouse Report -- Post Physical Inventory Count</td>', '', 'PBC');
row('<td class="report" colspan="8">31-Dec-20</td>');
row(td() + td() + td() + td() + td() + td('Pallet', 'head num') + td() + td('Total', 'head num'));
row(['Pallet Location', 'Sku#', 'Style', 'Type', 'Size'].map(function(t) {
	return td(t, 'head line-under');
}).join('') + td('Quantity', 'head num line-under') + td() + td('Quantity', 'head num line-under'));

var pallet = 0;
groups.forEach(function(g) {
	g.counts.forEach(function(count, n) {
		var last = g.total && n == g.counts.length - 1;
		pallet++;
		row(td('A' + pallet, 'sum') + td(g.sku, 'num sum') + td('Siren', 'sum') + td("Men's", 'sum') +
			td(g.size, 'num sum') + td(count, 'num sum') + td(g.ref, 'ref num sum') +
			td(last ? g.total : '', 'num sum' + (last && g.flag ? ' flag' : '')),
			last ? 'H-3' : '', '', last ? 'last' : '');
	});
});
// top edge of the next row
html += '<tr><th></th>' + widths.map(function(w, n) {
	return td('', n == 9 ? 'edge' : n == 10 ? 'black' : '');
}).join('') + '</tr>';

grid.querySelector('tbody').innerHTML = html;
```
